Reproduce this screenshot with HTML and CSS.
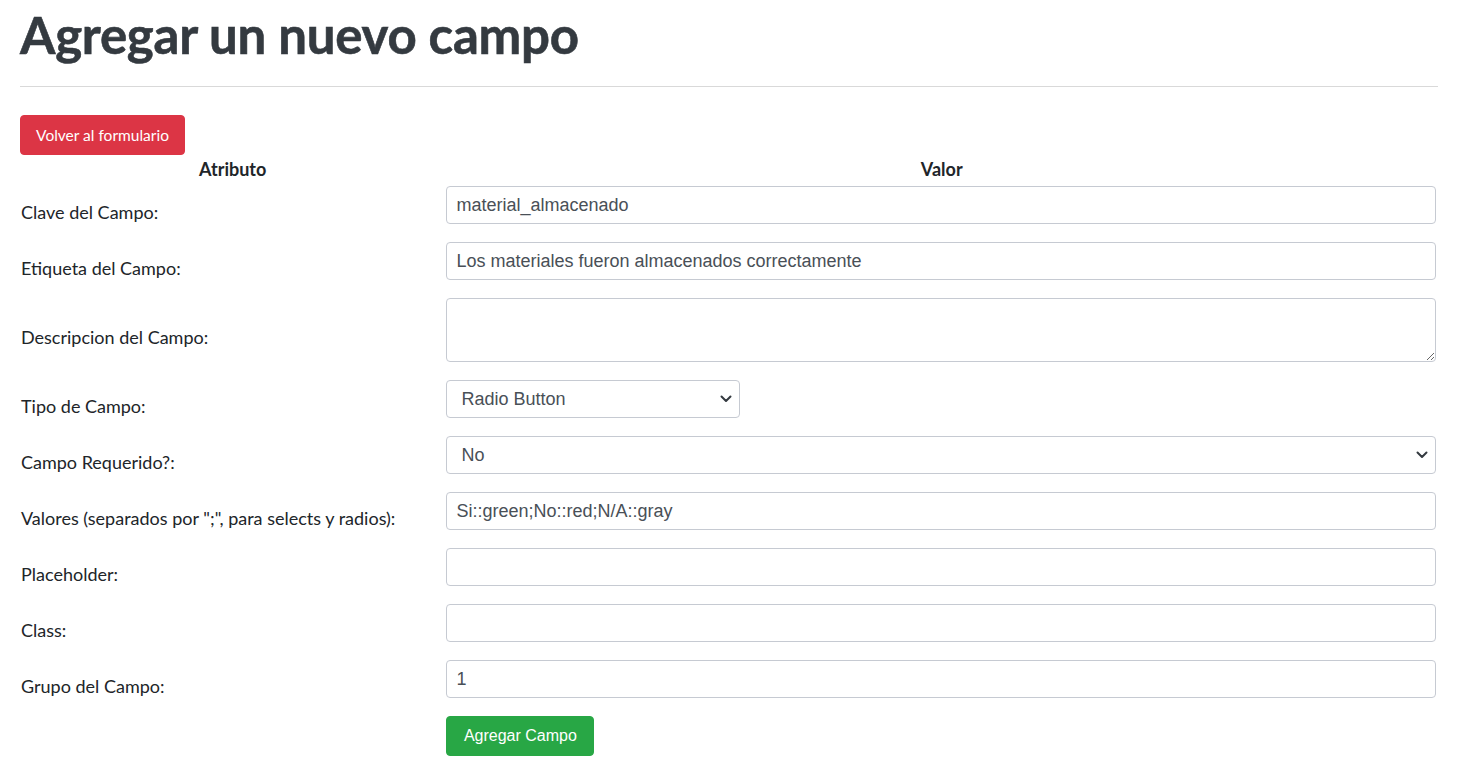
FILE: index.html
```html
<!DOCTYPE html>
<html lang="es">
<head>
<meta charset="utf-8">
<title>Agregar un nuevo campo</title>
<link rel="stylesheet" href="styles.css">
</head>
<body>
<div class="page">
  <h1 class="title">Agregar un nuevo campo</h1>
  <hr class="rule">
  <button class="btn btn-danger" type="button">Volver al formulario</button>
  <form class="field-form">
    <table class="form-table">
      <colgroup><col class="col-attr"><col class="col-val"></colgroup>
      <thead>
        <tr><th>Atributo</th><th>Valor</th></tr>
      </thead>
      <tbody>
        <tr><td class="lbl">Clave del Campo:</td><td class="val"><input class="control" type="text" value="material_almacenado"></td></tr>
        <tr><td class="lbl">Etiqueta del Campo:</td><td class="val"><input class="control" type="text" value="Los materiales fueron almacenados correctamente"></td></tr>
        <tr><td class="lbl">Descripcion del Campo:</td><td class="val"><textarea class="control area"></textarea></td></tr>
        <tr><td class="lbl">Tipo de Campo:</td><td class="val">
          <div class="select-wrap narrow">
            <select class="control select"><option>Radio Button</option></select>
            <svg class="chev" width="12" height="8" viewBox="0 0 12 8"><path d="M1.5 1.5 L6 6 L10.5 1.5" fill="none" stroke="#343a40" stroke-width="2" stroke-linecap="round" stroke-linejoin="round"/></svg>
          </div>
        </td></tr>
        <tr><td class="lbl">Campo Requerido?:</td><td class="val">
          <div class="select-wrap">
            <select class="control select"><option>No</option></select>
            <svg class="chev" width="12" height="8" viewBox="0 0 12 8"><path d="M1.5 1.5 L6 6 L10.5 1.5" fill="none" stroke="#343a40" stroke-width="2" stroke-linecap="round" stroke-linejoin="round"/></svg>
          </div>
        </td></tr>
        <tr><td class="lbl">Valores (separados por ";", para selects y radios):</td><td class="val"><input class="control" type="text" value="Si::green;No::red;N/A::gray"></td></tr>
        <tr><td class="lbl">Placeholder:</td><td class="val"><input class="control" type="text" value=""></td></tr>
        <tr><td class="lbl">Class:</td><td class="val"><input class="control" type="text" value=""></td></tr>
        <tr><td class="lbl">Grupo del Campo:</td><td class="val"><input class="control" type="text" value="1"></td></tr>
        <tr><td></td><td class="val"><button class="btn btn-success" type="button">Agregar Campo</button></td></tr>
      </tbody>
    </table>
  </form>
</div>
</body>
</html>
```
FILE: styles.css
```css
html, body {
  margin: 0;
  padding: 0;
  background: #ffffff;
}
body {
  font-family: "Lato", "Liberation Sans", sans-serif;
  color: #212529;
}
.page {
  padding: 0 21px 0 20px;
}
.title {
  margin: 0;
  padding-top: 4px;
  font-family: "Lato", "Liberation Sans", sans-serif;
  font-weight: 700;
  font-size: 51px;
  line-height: 62px;
  color: #343a40;
  letter-spacing: -0.25px;
  -webkit-text-stroke: 0.6px #343a40;
}
.rule {
  margin: 20px 0 28px 0;
  border: 0;
  border-top: 1px solid #d9d9d9;
  height: 0;
}
.btn {
  display: inline-block;
  border: 1px solid transparent;
  border-radius: 4px;
  color: #ffffff;
  cursor: pointer;
  height: 40px;
}
.btn-danger {
  background: #dc3545;
  border-color: #dc3545;
  font-family: "Lato", "Liberation Sans", sans-serif;
  font-size: 15.5px;
  padding: 0 14px;
  width: 165px;
}
.btn-success {
  background: #28a745;
  border-color: #28a745;
  font-family: "Liberation Sans", Arial, sans-serif;
  font-size: 16px;
  padding: 0 16px;
  width: 148px;
}
.field-form {
  margin: 0;
}
.form-table {
  width: 100%;
  border-collapse: collapse;
  margin-top: 1px;
}
.col-attr { width: 30%; }
.form-table th {
  font-size: 18px;
  font-weight: 700;
  line-height: 22px;
  padding: 2px 2px 4px;
  text-align: center;
  color: #212529;
}
.form-table td {
  padding: 2px;
  vertical-align: middle;
}
.form-table td.val {
  padding-left: 1px;
}
.lbl {
  font-size: 18px;
  color: #212529;
}
.form-table td.lbl {
  padding-left: 1px;
}
.control {
  display: block;
  box-sizing: border-box;
  width: 100%;
  height: 38px;
  margin: 0 0 14px 0;
  padding: 0 9px;
  border: 1px solid #c6cad2;
  border-radius: 4px;
  background: #ffffff;
  font-family: "Liberation Sans", Arial, sans-serif;
  font-size: 18px;
  color: #495057;
  outline: none;
}
.area {
  height: 64px;
  resize: vertical;
  padding-top: 6px;
}
.select-wrap {
  position: relative;
}
.select-wrap.narrow {
  width: 294px;
}
.select {
  appearance: none;
  -webkit-appearance: none;
  padding-left: 14px;
}
.chev {
  position: absolute;
  right: 8px;
  top: 15px;
}
```
